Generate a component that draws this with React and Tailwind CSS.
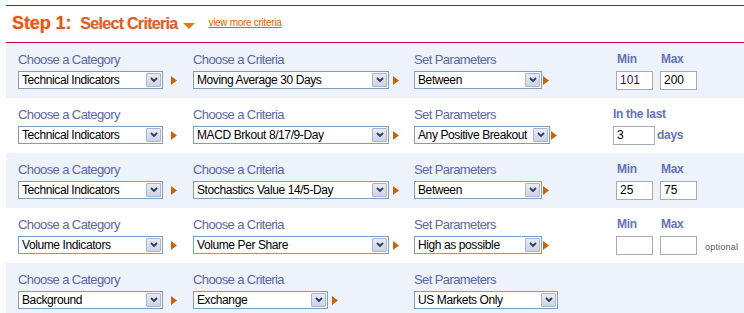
import React from 'react';

const rows = [
  {
    category: 'Technical Indicators',
    criteria: 'Moving Average 30 Days',
    criteriaW: 196,
    param: 'Between',
    paramW: 128,
    paramArrow: true,
    extra: { type: 'range', min: '101', max: '200', minColor: 'text-[#4a0a5a]' },
  },
  {
    category: 'Technical Indicators',
    criteria: 'MACD Brkout 8/17/9-Day',
    criteriaW: 196,
    param: 'Any Positive Breakout',
    paramW: 136,
    paramArrow: true,
    extra: { type: 'last', value: '3' },
  },
  {
    category: 'Technical Indicators',
    criteria: 'Stochastics Value 14/5-Day',
    criteriaW: 196,
    param: 'Between',
    paramW: 128,
    paramArrow: true,
    extra: { type: 'range', min: '25', max: '75' },
  },
  {
    category: 'Volume Indicators',
    criteria: 'Volume Per Share',
    criteriaW: 196,
    param: 'High as possible',
    paramW: 128,
    paramArrow: true,
    extra: { type: 'range', min: '', max: '', optional: true },
  },
  {
    category: 'Background',
    criteria: 'Exchange',
    criteriaW: 135,
    param: 'US Markets Only',
    paramW: 144,
    paramArrow: false,
    extra: null,
  },
];

const Arrow = ({ gap = 'ml-[6px]' }) => (
  <svg width="6" height="9" viewBox="0 0 6 9" className={`${gap} shrink-0`}>
    <path d="M0 0 L6 4.5 L0 9 Z" fill="#c8650a" />
  </svg>
);

const Select = ({ value, width }) => (
  <div
    className="flex h-[18px] items-stretch border border-[#7f9db9] bg-white"
    style={{ width }}
  >
    <span className="flex-1 truncate pl-[3px] text-[12px] leading-[16px] tracking-[-0.4px] text-black">
      {value}
    </span>
    <span className="m-[1px] flex w-[15px] items-center justify-center rounded-[1px] border border-[#a9b4d0] bg-gradient-to-b from-[#e8ebf4] to-[#cdd3e4]">
      <svg width="8" height="6" viewBox="0 0 8 6">
        <path d="M1 1 L4 4 L7 1" stroke="#2d3a5c" strokeWidth="1.8" fill="none" />
      </svg>
    </span>
  </div>
);

const Label = ({ children }) => (
  <div className="mb-[4px] h-[15px] text-[13px] leading-[15px] tracking-[-0.6px] text-[#5b68a4]">
    {children}
  </div>
);

const BoldLabel = ({ children, className = '' }) => (
  <div className={`text-[12px] font-bold leading-[15px] tracking-[-0.3px] text-[#6574b4] ${className}`}>
    {children}
  </div>
);

const Box = ({ value, w = 37, color = 'text-black' }) => (
  <div
    className={`h-[19px] border border-[#a5acb2] bg-white pl-[3px] text-[12px] leading-[17px] ${color}`}
    style={{ width: w }}
  >
    {value}
  </div>
);

const Extra = ({ extra }) => {
  if (!extra) return null;
  if (extra.type === 'last') {
    return (
      <div className="flex flex-col self-start">
        <BoldLabel className="mb-[4px]">In the last</BoldLabel>
        <div className="flex items-center gap-[2px]">
          <Box value={extra.value} w={42} />
          <BoldLabel>days</BoldLabel>
        </div>
      </div>
    );
  }
  return (
    <div className="flex items-end self-start pl-[3px]">
      <div className="flex flex-col">
        <BoldLabel className="mb-[4px] pl-[1px]">Min</BoldLabel>
        <Box value={extra.min} color={extra.minColor || 'text-black'} />
      </div>
      <div className="ml-[7px] flex flex-col">
        <BoldLabel className="mb-[4px] pl-[1px]">Max</BoldLabel>
        <Box value={extra.max} />
      </div>
      {extra.optional && (
        <span className="mb-[2px] ml-[8px] text-[9px] leading-[12px] tracking-[0.2px] text-[#555]">
          optional
        </span>
      )}
    </div>
  );
};

const Row = ({ row, shaded }) => (
  <div
    className={`grid h-[55px] grid-cols-[175px_221px_199px_1fr] items-start pl-[12px] pt-[9px] ${
      shaded ? 'bg-[#eef2fb]' : 'bg-white'
    }`}
  >
    <div className="flex flex-col">
      <Label>Choose a Category</Label>
      <div className="flex items-center">
        <Select value={row.category} width={145} />
        <Arrow gap="ml-[8px]" />
      </div>
    </div>
    <div className="flex flex-col">
      <Label>Choose a Criteria</Label>
      <div className="flex items-center">
        <Select value={row.criteria} width={row.criteriaW} />
        <Arrow gap="ml-[4px]" />
      </div>
    </div>
    <div className="flex flex-col">
      <Label>Set Parameters</Label>
      <div className="flex items-center">
        <Select value={row.param} width={row.paramW} />
        {row.paramArrow && <Arrow gap="ml-[1px]" />}
      </div>
    </div>
    <Extra extra={row.extra} />
  </div>
);

export default function App() {
  return (
    <div className="h-[313px] w-[744px] overflow-hidden bg-white font-['Liberation_Sans',Arial,sans-serif]">
      <div className="pl-[6px] pt-[5px]">
        <div className="flex h-[38px] items-center border-y border-[#cc0033] pl-[6px] pb-[1px]">
          <span className="text-[18px] font-bold tracking-[-0.1px] text-[#e25a12] [text-shadow:0_0_2px_rgba(226,90,18,0.45)]">
            Step 1:
          </span>
          <span className="ml-[9px] text-[16px] font-bold tracking-[-0.7px] text-[#d9622c] [text-shadow:0_0_1px_rgba(217,98,44,0.4)]">
            Select Criteria
          </span>
          <svg width="12" height="6" viewBox="0 0 12 6" className="ml-[6px] mt-[5px]">
            <path d="M0 0 L12 0 L6 6 Z" fill="#e2781a" />
          </svg>
          <a
            href="#"
            className="ml-[13px] mb-[3px] text-[10px] tracking-[-0.3px] text-[#e06000] underline"
          >
            view more criteria
          </a>
        </div>
        {rows.map((row, i) => (
          <Row key={i} row={row} shaded={i % 2 === 0} />
        ))}
      </div>
    </div>
  );
}
